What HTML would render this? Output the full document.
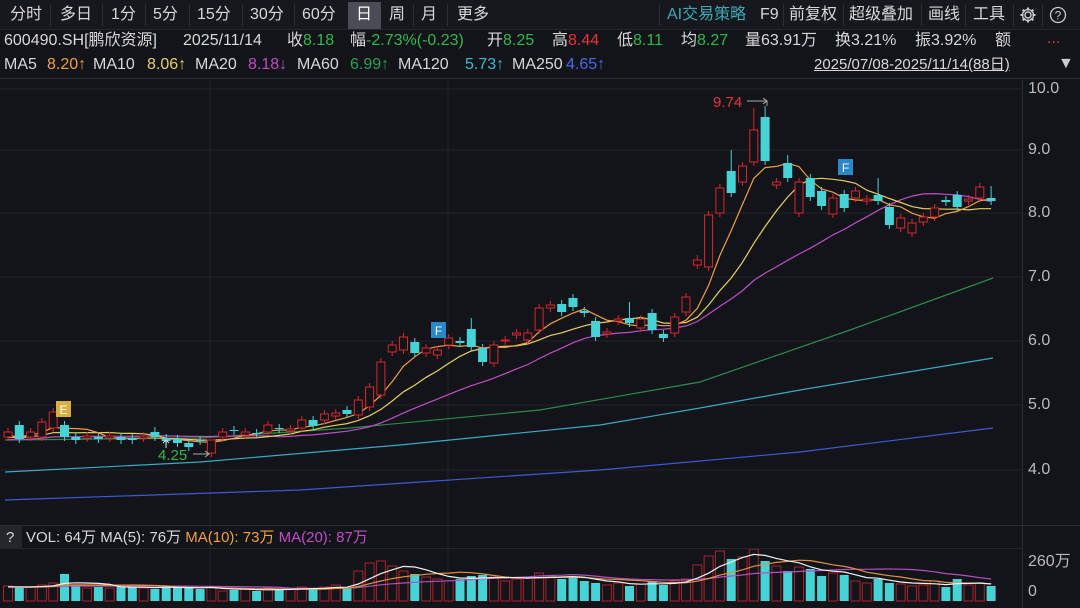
<!DOCTYPE html>
<html><head><meta charset="utf-8">
<style>
*{margin:0;padding:0;box-sizing:border-box}
body{width:1080px;height:608px;background:#131419;overflow:hidden;font-family:"Liberation Sans","Noto Sans CJK SC",sans-serif;color:#d8d8d8;position:relative}
.a{position:absolute;white-space:nowrap;font-size:16px;line-height:18px}
.g{color:#2fb84a}.r{color:#e8333a}.o{color:#f0a040}.y{color:#e8d060}.m{color:#c04cc8}.dg{color:#2aa050}.c{color:#3cb8d0}.b{color:#4a6ae8}
#top{position:absolute;left:0;top:0;width:1080px;height:30px;background:#16181d;border-bottom:1px solid #24272d}
.sep{position:absolute;top:4px;width:1px;height:22px;background:#2a2d33}
</style></head><body>
<div id="top"></div>
<div style="position:absolute;left:348px;top:2px;width:33px;height:27px;background:#4a4d55"></div>
<div class="a" style="left:10px;top:6px">分时</div>
<div class="a" style="left:60px;top:6px">多日</div>
<div class="a" style="left:111px;top:6px">1分</div>
<div class="a" style="left:153px;top:6px">5分</div>
<div class="a" style="left:197px;top:6px">15分</div>
<div class="a" style="left:250px;top:6px">30分</div>
<div class="a" style="left:302px;top:6px">60分</div>
<div class="a" style="left:356px;top:6px;color:#fff">日</div>
<div class="a" style="left:389px;top:6px">周</div>
<div class="a" style="left:421px;top:6px">月</div>
<div class="a" style="left:457px;top:6px">更多</div>
<div class="a" style="left:667px;top:6px;color:#3ca8b8">AI交易策略</div>
<div class="a" style="left:760px;top:6px">F9</div>
<div class="a" style="left:789px;top:6px">前复权</div>
<div class="a" style="left:849px;top:6px">超级叠加</div>
<div class="a" style="left:928px;top:6px">画线</div>
<div class="a" style="left:973px;top:6px">工具</div>
<svg style="position:absolute;left:1019px;top:6px" width="18" height="18" viewBox="0 0 18 18"><circle cx="9" cy="9" r="3" fill="none" stroke="#ccc" stroke-width="1.5"/><path d="M9 1.5v3M9 13.5v3M1.5 9h3M13.5 9h3M3.7 3.7l2.1 2.1M12.2 12.2l2.1 2.1M3.7 14.3l2.1-2.1M12.2 5.8l2.1-2.1" stroke="#ccc" stroke-width="2"/><circle cx="9" cy="9" r="5.5" fill="none" stroke="#ccc" stroke-width="1.3"/></svg>
<svg style="position:absolute;left:1049px;top:6px" width="18" height="18"><circle cx="9" cy="9" r="7.5" fill="none" stroke="#ccc" stroke-width="1.3"/><text x="9" y="13.5" font-size="12" fill="#ccc" text-anchor="middle" font-family="Liberation Sans">?</text></svg>
<div class="sep" style="left:50px"></div><div class="sep" style="left:102px"></div><div class="sep" style="left:145px"></div><div class="sep" style="left:189px"></div><div class="sep" style="left:242px"></div><div class="sep" style="left:294px"></div><div class="sep" style="left:413px"></div><div class="sep" style="left:447px"></div><div class="sep" style="left:659px"></div><div class="sep" style="left:783px"></div><div class="sep" style="left:843px"></div><div class="sep" style="left:921px"></div><div class="sep" style="left:965px"></div><div class="sep" style="left:1013px"></div><div class="sep" style="left:1042px"></div>

<div class="a" style="left:4px;top:32px">600490.SH[鹏欣资源]</div>
<div class="a" style="left:183px;top:32px">2025/11/14</div>
<div class="a" style="left:287px;top:32px">收<span class="g">8.18</span></div>
<div class="a" style="left:350px;top:32px">幅<span class="g">-2.73%(-0.23)</span></div>
<div class="a" style="left:487px;top:32px">开<span class="g">8.25</span></div>
<div class="a" style="left:552px;top:32px">高<span class="r">8.44</span></div>
<div class="a" style="left:617px;top:32px">低<span class="g">8.11</span></div>
<div class="a" style="left:681px;top:32px">均<span class="g">8.27</span></div>
<div class="a" style="left:745px;top:32px">量63.91万</div>
<div class="a" style="left:835px;top:32px">换3.21%</div>
<div class="a" style="left:915px;top:32px">振3.92%</div>
<div class="a" style="left:995px;top:32px">额</div>
<div class="a r" style="left:1047px;top:30px">...</div>

<div class="a" style="left:4px;top:56px">MA5</div><div class="a o" style="left:47px;top:56px">8.20↑</div>
<div class="a" style="left:93px;top:56px">MA10</div><div class="a y" style="left:147px;top:56px">8.06↑</div>
<div class="a" style="left:195px;top:56px">MA20</div><div class="a m" style="left:248px;top:56px">8.18↓</div>
<div class="a" style="left:297px;top:56px">MA60</div><div class="a dg" style="left:350px;top:56px">6.99↑</div>
<div class="a" style="left:398px;top:56px">MA120</div><div class="a c" style="left:465px;top:56px">5.73↑</div>
<div class="a" style="left:512px;top:56px">MA250</div><div class="a b" style="left:566px;top:56px">4.65↑</div>
<div class="a" style="left:814px;top:56px;font-size:15px;text-decoration:underline">2025/07/08-2025/11/14(88日)</div>
<div class="a" style="left:1058px;top:55px;color:#ccc">▼</div>
<div style="position:absolute;left:0;top:78px;width:1080px;height:1px;background:#2a2d33"></div>

<svg id="ch" style="position:absolute;left:0;top:0" width="1080" height="608"></svg>

<div style="position:absolute;left:0;top:525px;width:1080px;height:1px;background:#2a2d33"></div>
<div style="position:absolute;left:0;top:526px;width:22px;height:22px;background:#24262c"></div>
<div class="a" style="left:6px;top:529px;font-size:15px">?</div>
<div class="a" style="left:26px;top:529px;font-size:15px">VOL: 64万 MA(5): 76万 <span class="o">MA(10): 73万</span> <span class="m">MA(20): 87万</span></div>
<div style="position:absolute;left:0;top:548px;width:1022px;height:1px;background:#24272d"></div>
<div class="a" style="left:1028px;top:553px;color:#bbb">260万</div>
<div class="a" style="left:1028px;top:583px;color:#bbb">0</div>

<div class="a" style="left:1028px;top:80px;color:#bbb">10.0</div>
<div class="a" style="left:1028px;top:141px;color:#bbb">9.0</div>
<div class="a" style="left:1028px;top:204px;color:#bbb">8.0</div>
<div class="a" style="left:1028px;top:268px;color:#bbb">7.0</div>
<div class="a" style="left:1028px;top:332px;color:#bbb">6.0</div>
<div class="a" style="left:1028px;top:396px;color:#bbb">5.0</div>
<div class="a" style="left:1028px;top:461px;color:#bbb">4.0</div>

<script>
var R="#d8262d",C="#45d3d6";
var d=[[432,437,R],[425,439,C],[432,437,R],[422,437,R],[412,428,R],[425,437,C],[437,440,C],[436,438,R],[437,439,C],[436,438,R],[437,440,C],[438,440,C],[436,438,R],[432,437,C],[438,441,C],[439,443,C],[443,447,C],[440,441,C],[440,453,R],
[432,437,R],[430,431,C],[432,435,R],[433,434,C],[425,432,R],[428,429,C],[429,431,R],[420,428,R],[420,426,C],[414,420,R],[413,416,R],[410,414,C],
[400,415,R],[387,407,R],[362,395,R],[345,352,R],[337,350,R],[342,353,C],[348,353,R],[350,355,R],[338,345,R],[341,343,C],[329,347,C],[348,362,C],[345,363,R],[340,341,R],[333,335,R],[333,340,R],[308,330,R],[305,308,R],[304,312,C],[298,307,C],[311,313,C],[321,337,C],[332,334,R],[319,321,R],[318,323,C],[319,328,R],[313,330,C],[334,338,C],[317,333,R],[297,312,R],
[260,265,R],[215,267,R],[188,213,R],[171,193,C],[166,182,R],[130,162,R],[117,161,C],[182,185,R],[163,178,C],[182,213,R],[178,197,C],[191,206,C],[198,214,R],[194,208,C],[191,198,R],[199,201,R],[195,201,C],[207,225,C],[218,228,R],[223,233,R],[217,222,R],[208,217,R],[200,202,C],[195,207,C],[199,201,R],[187,198,R],[198,201,C]];
var hi={66:108,67:106,64:150,61:255,69:155,77:178,55:302,87:186,41:318,13:427,18:440};
var vol=[15,13,14,16,18,27,16,13,14,13,15,14,13,12,15,14,13,12,14,10,11,12,10,13,11,12,14,12,14,16,13,30,38,40,35,30,27,24,22,20,22,25,26,24,20,22,23,28,25,22,24,20,18,16,18,15,17,20,16,20,22,36,45,50,42,44,52,40,35,30,34,32,25,28,26,20,18,22,18,17,15,16,20,14,22,16,18,15];
var s="";
[89,150,213,277,341,405,470].forEach(function(y){s+='<line x1="0" y1="'+y+'" x2="1022" y2="'+y+'" stroke="#202329" stroke-width="1"/>';});
s+='<line x1="210" y1="80" x2="210" y2="600" stroke="#22252b"/><line x1="448" y1="80" x2="448" y2="600" stroke="#22252b"/><line x1="1022.5" y1="80" x2="1022.5" y2="608" stroke="#2a2d33"/>';
function X(i){return 8+11.3*i;}
s+='<polyline fill="none" stroke="#2a8a48" stroke-width="1.2" points="5,440 200,438 350,428 540,410 700,382 850,330 993,278"/>';
s+='<polyline fill="none" stroke="#3aa8c8" stroke-width="1.2" points="5,472 200,462 400,445 600,425 700,408 800,390 993,358"/>';
s+='<polyline fill="none" stroke="#3a5ad8" stroke-width="1.2" points="5,500 300,490 600,470 800,452 993,428"/>';
var cl=d.map(function(c){return c[2]==R?c[0]:c[1];});
function ma(arr,n,pad){var o=[];for(var i=0;i<arr.length;i++){var t=0;for(var k=i-n+1;k<=i;k++)t+=(k<0?pad:arr[k]);o.push(t/n);}return o;}
function pl(a,col){return '<polyline fill="none" stroke="'+col+'" stroke-width="1.2" points="'+a.map(function(v,i){return X(i).toFixed(1)+','+v.toFixed(1);}).join(' ')+'"/>';}
s+=pl(ma(cl,20,440),"#c04cc8")+pl(ma(cl,10,438),"#e8d060")+pl(ma(cl,5,437),"#f0a040");
d.forEach(function(c,i){var x=X(i),t=c[0],b=c[1],h=Math.max(1,b-t);var wh=hi[i]||t-4,wl=b+4;
s+='<line x1="'+x+'" y1="'+wh+'" x2="'+x+'" y2="'+wl+'" stroke="'+c[2]+'" stroke-width="1"/>';
if(c[2]==R)s+='<rect x="'+(x-4)+'" y="'+t+'" width="8" height="'+h+'" fill="#131419" stroke="'+R+'" stroke-width="1"/>';
else s+='<rect x="'+(x-4.5)+'" y="'+t+'" width="9" height="'+h+'" fill="'+C+'"/>';
var vh=vol[i];
if(c[2]==R)s+='<rect x="'+(x-4.5)+'" y="'+(601-vh)+'" width="9" height="'+vh+'" fill="none" stroke="#a8242a" stroke-width="1"/>';
else s+='<rect x="'+(x-4.5)+'" y="'+(601-vh)+'" width="9" height="'+vh+'" fill="'+C+'"/>';});
var vy=vol.map(function(v){return 601-v;});
s+=pl(ma(vy,20,587),"#b050c0")+pl(ma(vy,10,587),"#e09040")+pl(ma(vy,5,587),"#f0f0f0");
s+='<rect x="56" y="401" width="15" height="16" fill="#d8b040"/><text x="63.5" y="414" font-size="12" fill="#fff" text-anchor="middle" font-family="Liberation Sans">E</text>';
s+='<rect x="431" y="322" width="15" height="16" fill="#2a88c8"/><text x="438.5" y="335" font-size="12" fill="#fff" text-anchor="middle" font-family="Liberation Sans">F</text>';
s+='<rect x="838" y="159" width="15" height="16" fill="#2a88c8"/><text x="845.5" y="172" font-size="12" fill="#fff" text-anchor="middle" font-family="Liberation Sans">F</text>';
s+='<text x="713" y="107" font-size="15" fill="#e8333a" font-family="Liberation Sans">9.74</text><path d="M747 101h20M763 98l4 3-4 3M767 101v5" stroke="#aaa" fill="none"/>';
s+='<text x="158" y="460" font-size="15" fill="#2fb84a" font-family="Liberation Sans">4.25</text><path d="M193 454h16M205 451l4 3-4 3" stroke="#aaa" fill="none"/><path d="M166 448v-8M163 443l3-3 3 3" stroke="#ddd" fill="none"/>';
document.getElementById("ch").innerHTML=s;
</script>
</body></html>
